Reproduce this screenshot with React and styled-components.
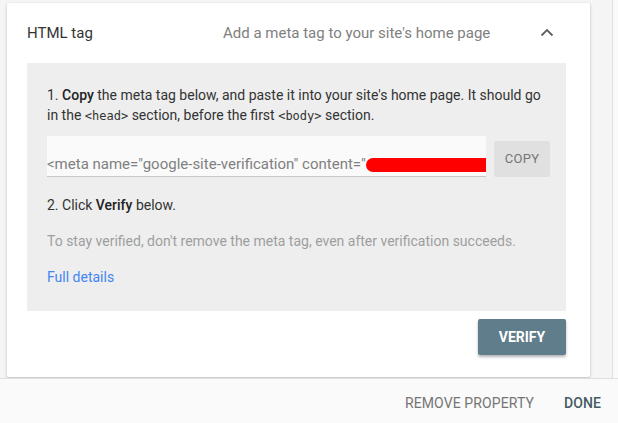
import React from "react";
import styled, {createGlobalStyle} from "styled-components";

const Global = createGlobalStyle`
  html, body {
    margin: 0;
    padding: 0;
    height: 100%;
    overflow: hidden;
  }
  body {
    font-family: Roboto, "Liberation Sans", Arial, sans-serif;
    background: #f5f5f5;
  }
  #root {
    height: 100%;
  }
`;

function ChevronUp() {
    return (
        <svg width="14" height="9" viewBox="0 0 14 9">
            <path d="M1.5 7.5 L7 2 L12.5 7.5" fill="none" stroke="#616161" strokeWidth="1.8"/>
        </svg>
    )
}

function App() {
    return (
        <Page>
            <Global/>
            <Top>
                <Card>
                    <Header>
                        <Title>HTML tag</Title>
                        <Subtitle>Add a meta tag to your site's home page</Subtitle>
                        <Toggle><ChevronUp/></Toggle>
                    </Header>
                    <Panel>
                        <Step>
                            1. <b>Copy</b> the meta tag below, and paste it into your site's home page. It should go
                            in the <Code>&lt;head&gt;</Code> section, before the first <Code>&lt;body&gt;</Code> section.
                        </Step>
                        <CopyRow>
                            <TagField>
                                <TagText>&lt;meta name="google-site-verification" content="</TagText>
                                <Redacted/>
                            </TagField>
                            <CopyButton>COPY</CopyButton>
                        </CopyRow>
                        <Step $gap={18}>2. Click <b>Verify</b> below.</Step>
                        <Note>To stay verified, don't remove the meta tag, even after verification succeeds.</Note>
                        <Link href="#">Full details</Link>
                    </Panel>
                    <Actions>
                        <VerifyButton>VERIFY</VerifyButton>
                    </Actions>
                </Card>
                <Scrollbar/>
            </Top>
            <Footer>
                <FlatButton>REMOVE PROPERTY</FlatButton>
                <FlatButton $primary>DONE</FlatButton>
            </Footer>
        </Page>
    )
}

const Page = styled.div`
  height: 100%;
  display: flex;
  flex-direction: column;
`;

const Top = styled.div`
  height: 378px;
  display: flex;
  padding: 3px 0 0 7px;
  box-sizing: border-box;
  overflow: hidden;
`;

const Card = styled.div`
  width: 583px;
  height: 374px;
  flex-shrink: 0;
  background: #fff;
  box-shadow: 0 1px 3px rgba(0, 0, 0, 0.25);
  border-radius: 2px;
  padding: 0 24px 0 20px;
  box-sizing: border-box;
`;

const Header = styled.div`
  height: 60px;
  display: flex;
  align-items: center;
`;

const Title = styled.div`
  width: 196px;
  font-size: 15px;
  color: #333333;
`;

const Subtitle = styled.div`
  flex: 1;
  font-size: 15px;
  color: #808080;
`;

const Toggle = styled.div`
  width: 26px;
  display: flex;
  justify-content: flex-start;
  padding-bottom: 2px;
`;

const Panel = styled.div`
  background: #eeeeee;
  height: 248px;
  padding: 22px 16px 0 20px;
  box-sizing: border-box;
  display: flex;
  flex-direction: column;
  align-items: flex-start;
`;

const Step = styled.div`
  margin-top: ${props => props.$gap || 0}px;
  font-size: 14px;
  line-height: 20px;
  color: #333333;

  b {
    font-weight: 500;
    color: #222222;
  }
`;

const Code = styled.code`
  font-family: "DejaVu Sans Mono", monospace;
  font-size: 12px;
`;

const CopyRow = styled.div`
  display: flex;
  align-items: center;
  gap: 8px;
  margin-top: 10px;
`;

const TagField = styled.div`
  width: 439px;
  height: 41px;
  background: #fafafa;
  border-bottom: 1px solid #c8c8c8;
  box-sizing: border-box;
  display: flex;
  align-items: flex-end;
  padding-bottom: 3px;
  overflow: hidden;
  white-space: nowrap;
`;

const TagText = styled.span`
  font-size: 15px;
  color: #808080;
  flex-shrink: 0;
`;

const Redacted = styled.span`
  display: inline-block;
  flex-shrink: 0;
  width: 124px;
  height: 14px;
  background: #ff0000;
  border-radius: 7px 2px 2px 7px;
  margin-bottom: 1px;
`;

const CopyButton = styled.button`
  width: 56px;
  height: 36px;
  border: none;
  border-radius: 2px;
  background: #e0e0e0;
  color: #757575;
  font-family: Roboto, sans-serif;
  font-size: 13px;
  letter-spacing: 0.3px;
  margin-top: 4px;
`;

const Note = styled.div`
  margin-top: 16px;
  font-size: 14px;
  line-height: 20px;
  color: #9e9e9e;
`;

const Link = styled.a`
  margin-top: 16px;
  font-size: 14px;
  line-height: 20px;
  color: #4285f4;
  text-decoration: none;
`;

const Actions = styled.div`
  display: flex;
  justify-content: flex-end;
  padding-top: 8px;
`;

const VerifyButton = styled.button`
  width: 88px;
  height: 36px;
  border: none;
  border-radius: 2px;
  background: #607d8b;
  color: #fff;
  font-family: Roboto, sans-serif;
  font-weight: 700;
  font-size: 14px;
  box-shadow: 0 2px 3px rgba(0, 0, 0, 0.3);
`;

const Scrollbar = styled.div`
  margin-left: auto;
  width: 5px;
  margin-top: -3px;
  border-left: 1px solid #e0e0e0;
  background: #fafafa;
`;

const Footer = styled.div`
  flex: 1;
  background: #fafafa;
  border-top: 1px solid #e0e0e0;
  display: flex;
  justify-content: flex-end;
  align-items: center;
  gap: 30px;
  padding: 3px 17px 0 0;
`;

const FlatButton = styled.div`
  font-size: 14px;
  color: ${props => props.$primary ? "#455a64" : "#757575"};
  font-weight: ${props => props.$primary ? 500 : 400};
  letter-spacing: 0.1px;
`;

export default App;
